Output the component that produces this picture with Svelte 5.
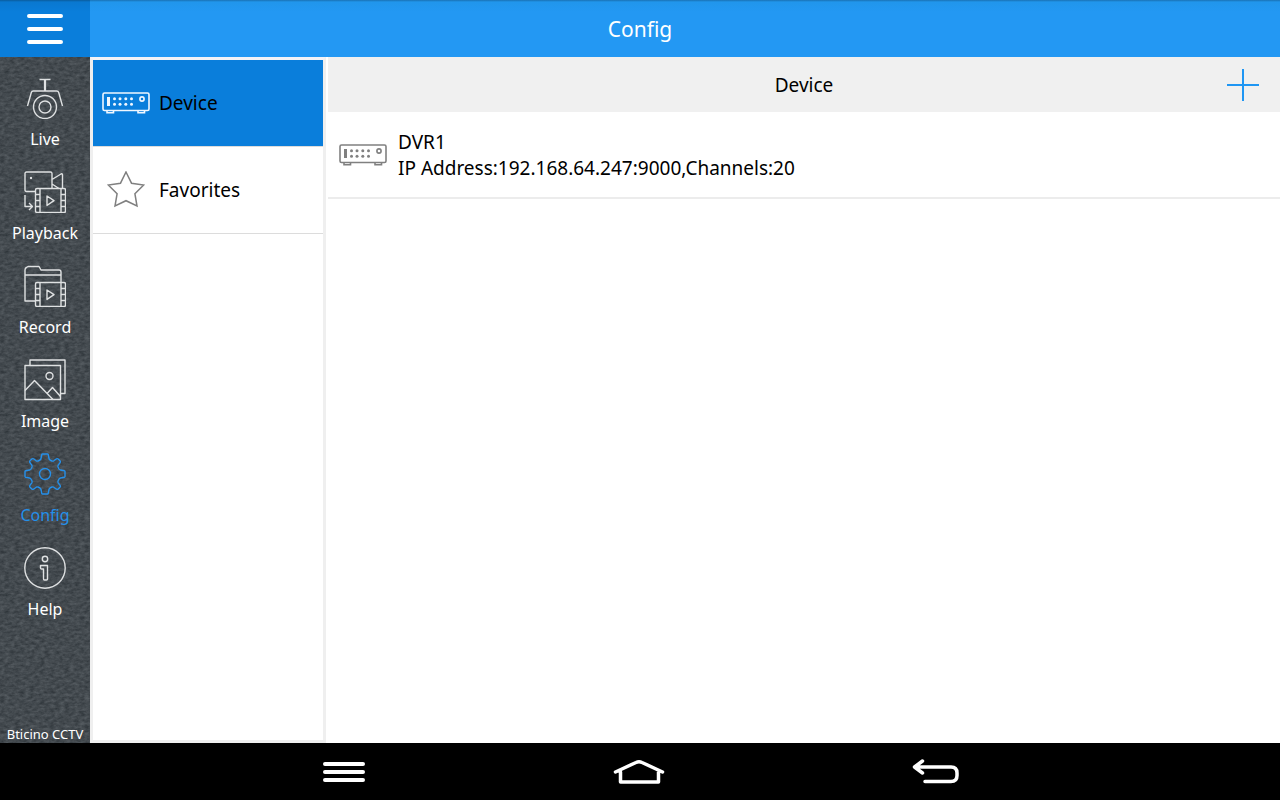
<script>
  const navItems = ['Live', 'Playback', 'Record', 'Image', 'Config', 'Help'];
  const menuItems = ['Device', 'Favorites'];
  let active = $state('Config');
  let section = $state('Device');
  const devices = [{ name: 'DVR1', address: '192.168.64.247:9000', channels: 20 }];
</script>

{#snippet recorder()}
  <svg class="recorder" width="48" height="22" viewBox="0 0 48 22" fill="none" stroke="currentColor" stroke-width="1.6" aria-hidden="true">
    <rect x="1" y="1" width="46" height="17.5" rx="1.5" />
    <path d="M5 19v1.7h6.5V19M36 19v1.7h6.500V19" />
    <path d="M6.500 5v9" stroke-width="3" />
    <circle cx="40" cy="7" r="2.100" />
    <g fill="currentColor" stroke="none">
      {#each [12.500, 18, 23.800, 29.500] as x}
        <circle cx={x} cy="6.800" r="1.500" />
        <circle cx={x} cy="12.200" r="1.500" />
      {/each}
    </g>
  </svg>
{/snippet}

{#snippet film()}
  <path d="M13 17.500h27q1.500 0 1.500 1.500v21q0 1.500-1.500 1.500H13q-1.500 0-1.500-1.500V19q0-1.500 1.500-1.500ZM16 17.500v24M37 17.500v24M11.500 23.500H16M11.500 29.500H16M11.500 35.500H16M37 23.500h4.500M37 29.500h4.500M37 35.500h4.500M23 25l7 4.700-7 4.700Z" />
{/snippet}

<div class="app">
  <header class="topbar">
    <button class="menu" aria-label="Menu">
      <svg width="38" height="32" viewBox="0 0 38 32" stroke="#fff" stroke-width="4" stroke-linecap="round" aria-hidden="true">
        <path d="M3 3h32M3 16h32M3 29h32" />
      </svg>
    </button>
    <h1>Config</h1>
  </header>

  <div class="body">
    <nav class="sidebar">
      <ul>
        {#each navItems as item}
          <li>
            <button class:active={active === item} onclick={() => (active = item)}>
              <svg width="42" height="42" viewBox="0 0 42 42" fill="none" stroke="currentColor" stroke-width="1.400" stroke-linejoin="round" aria-hidden="true">
                {#if item === 'Live'}
                  <path d="M15.500 2.500h11M3.500 29l3.800-13.500q.5-1.500 2-1.500h23.400q1.500 0 2 1.500l3.800 13.500" />
                  <path d="M21 2.500V14" stroke-width="2.200" />
                  <circle cx="21" cy="30" r="11.500" />
                  <circle cx="21" cy="30" r="6" />
                {:else if item === 'Playback'}
                  <path d="M11.500 20.500h-9q-1.500 0-1.500-1.500V2.500Q1 1 2.500 1h24Q28 1 28 2.500v15M28 8.500l9-5.500q1.500-.7 1.500 1v13.500M28 13l7 4.500M1 24v11.500h7M5 32l3.500 3.500L5 39" />
                  <circle cx="7" cy="7" r="1.200" fill="currentColor" stroke="none" />
                  {@render film()}
                {:else if item === 'Record'}
                  <path d="M11.500 36H1V5q0-2 1.500-2.500L4 1.500h11l2 3.500h18q2 0 2 2v10.500M1 10h36" />
                  {@render film()}
                {:else if item === 'Image'}
                  <path d="M6 6.500V1h35v33.500h-4.500" />
                  <rect x="1" y="6.500" width="35.500" height="34" />
                  <path d="M1 31.500l9.500-10 18.500 19M23 34.500l5.500-6 8 9" />
                  <circle cx="25.500" cy="17" r="3.500" />
                {:else if item === 'Config'}
                  <path d="M17 5.500L17.800 1.500Q18 1 18.500 1H23.500Q24 1 24.200 1.500L25 5.500Q25.200 6.500 26 7L28 8Q29 8.300 29.800 7.800L32.500 5.800Q33.500 5.300 34.200 6L36 7.800Q36.700 8.500 36.200 9.500L34.200 12.200Q33.700 13 34 14L35 16Q35.500 16.800 36.500 17L40.500 17.800Q41 18 41 18.500V23.500Q41 24 40.500 24.200L36.500 25Q35.500 25.200 35 26L34 28Q33.700 29 34.200 29.800L36.200 32.500Q36.700 33.500 36 34.200L34.200 36Q33.500 36.700 32.500 36.200L29.800 34.200Q29 33.700 28 34L26 35Q25.200 35.500 25 36.500L24.200 40.500Q24 41 23.500 41H18.500Q18 41 17.800 40.500L17 36.500Q16.800 35.500 16 35L14 34Q13 33.700 12.200 34.200L9.500 36.200Q8.500 36.700 7.800 36L6 34.200Q5.300 33.500 5.800 32.500L7.800 29.800Q8.300 29 8 28L7 26Q6.500 25.200 5.500 25L1.500 24.200Q1 24 1 23.500V18.500Q1 18 1.500 17.800L5.500 17Q6.500 16.800 7 16L8 14Q8.300 13 7.800 12.200L5.800 9.500Q5.300 8.500 6 7.800L7.800 6Q8.500 5.300 9.500 5.800L12.200 7.800Q13 8.300 14 8L16 7Q16.800 6.500 17 5.500Z" />
                  <circle cx="21" cy="21" r="5.500" />
                {:else}
                  <circle cx="21" cy="21" r="20.200" />
                  <circle cx="21" cy="12" r="2.700" />
                  <path d="M16.500 18.500h7v13.500q0 1-1 1h-2q-1 0-1-1V22h-2q-1 0-1-1Z" />
                {/if}
              </svg>
              <span>{item}</span>
            </button>
          </li>
        {/each}
      </ul>
      <p class="brand">Bticino CCTV</p>
    </nav>

    <aside class="panel">
      {#each menuItems as item}
        <button class="entry" class:selected={section === item} onclick={() => (section = item)}>
          <span class="glyph">
            {#if item === 'Device'}
              {@render recorder()}
            {:else}
              <svg width="38" height="38" viewBox="0 0 38 38" fill="none" stroke="#808080" stroke-width="1.500" aria-hidden="true">
                <path d="M19 1l5.500 11.200 12.200 1.800-8.800 8.700 2.100 12.300-11-5.300-11 5.300 2.100-12.300L1.300 14l12.200-1.800Z" />
              </svg>
            {/if}
          </span>
          <span>{item}</span>
        </button>
      {/each}
    </aside>

    <main>
      <div class="heading">
        <h2>Device</h2>
        <button aria-label="Add device">
          <svg width="32" height="32" viewBox="0 0 32 32" stroke="#1f96f3" stroke-width="2" aria-hidden="true">
            <path d="M16 0v32M0 16h32" />
          </svg>
        </button>
      </div>
      {#each devices as device}
        <button class="device">
          {@render recorder()}
          <span class="details">
            <span>{device.name}</span>
            <span>IP Address:{device.address},Channels:{device.channels}</span>
          </span>
        </button>
      {/each}
    </main>
  </div>

  <footer class="system">
    <button aria-label="Options">
      <svg width="44" height="24" viewBox="0 0 44 24" stroke="#fff" stroke-width="4" stroke-linecap="round" aria-hidden="true">
        <path d="M3 4h38M3 12h38M3 20h38" />
      </svg>
    </button>
    <button aria-label="Home">
      <svg width="52" height="26" viewBox="0 0 52 26" fill="none" stroke="#fff" stroke-width="3.500" stroke-linecap="round" stroke-linejoin="round" aria-hidden="true">
        <path d="M2.500 13L23 3.500q3-1.500 6 0L49.500 13M7.500 13v10h38V13" />
      </svg>
    </button>
    <button aria-label="Back">
      <svg width="48" height="26" viewBox="0 0 48 26" fill="none" stroke="#fff" stroke-width="3.500" stroke-linecap="round" stroke-linejoin="round" aria-hidden="true">
        <path d="M10.500 2L2.500 8l8 6M3 8h36q6 0 6 6v2.500q0 6-6 6H13" />
      </svg>
    </button>
  </footer>
</div>

<style>
  :global(body) {
    margin: 0;
  }
  .app {
    display: flex;
    flex-direction: column;
    min-height: 100vh;
    background: #fff;
    color: #000;
    font-family: 'Noto Sans', sans-serif;
    font-size: 19px;
  }
  button {
    border: 0;
    padding: 0;
    background: none;
    color: inherit;
    font: inherit;
    cursor: pointer;
  }
  svg {
    display: block;
    flex: none;
  }
  h1,
  h2,
  p,
  ul {
    margin: 0;
    padding: 0;
    font-weight: 400;
    list-style: none;
  }
  .topbar {
    display: flex;
    height: 57px;
    background: linear-gradient(#1a71b4, #2196ec 2px, #2398f3 12px);
    color: #fff;
  }
  .menu {
    display: grid;
    place-items: center;
    width: 90px;
    background: linear-gradient(#0b5c9c, #0a78d0 2px, #0a7edb 12px);
  }
  h1 {
    flex: 1;
    padding-right: 90px;
    font-size: 21px;
    line-height: 58px;
    text-align: center;
  }
  .body {
    display: flex;
    flex: 1;
  }
  .sidebar {
    display: flex;
    flex-direction: column;
    justify-content: space-between;
    width: 90px;
    background-color: #454b50;
    background-image: url("data:image/svg+xml,%3Csvg xmlns='http://www.w3.org/2000/svg' width='180' height='180'%3E%3Cfilter id='n' x='0' y='0' width='1' height='1' color-interpolation-filters='sRGB'%3E%3CfeTurbulence type='fractalNoise' baseFrequency='.2 .35' numOctaves='3' stitchTiles='stitch'/%3E%3CfeColorMatrix values='.2 0 0 0 .165 .2 0 0 0 .19 .2 0 0 0 .21 0 0 0 0 1'/%3E%3C/filter%3E%3Crect width='180' height='180' filter='url(%23n)'/%3E%3C/svg%3E");
    color: #fff;
  }
  .sidebar li button {
    display: flex;
    flex-direction: column;
    align-items: center;
    gap: 9px;
    width: 100%;
    padding: 20px 0 1px;
    font-size: 16px;
    line-height: 22px;
  }
  .sidebar li svg {
    color: #dfe1e2;
  }
  .sidebar .active,
  .sidebar .active svg {
    color: #2590ea;
  }
  .brand {
    font-size: 13px;
    line-height: 18px;
    text-align: center;
    white-space: nowrap;
  }
  .panel {
    box-sizing: border-box;
    width: 236px;
    border: 3px solid #efefef;
    border-top-color: #f3f3f7;
  }
  .entry {
    display: flex;
    align-items: center;
    gap: 8px;
    box-sizing: border-box;
    width: 100%;
    height: 87px;
    padding-left: 8px;
    border-bottom: 1px solid #dcdcdc;
  }
  .selected {
    background: #0a7edb;
  }
  .glyph {
    display: grid;
    place-items: center;
    width: 50px;
  }
  .recorder {
    color: #808080;
  }
  .selected .recorder {
    color: #f0f7ff;
  }
  main {
    flex: 1;
    margin-left: 2px;
  }
  .heading {
    display: flex;
    align-items: center;
    height: 55px;
    padding-right: 21px;
    background: #f0f0f0;
  }
  h2 {
    flex: 1;
    padding-left: 53px;
    font-size: 19px;
    text-align: center;
  }
  .device {
    display: flex;
    align-items: center;
    gap: 11px;
    box-sizing: border-box;
    width: 100%;
    height: 87px;
    padding-left: 11px;
    border-bottom: 2px solid #ececec;
    line-height: 26px;
    text-align: left;
  }
  .details {
    display: flex;
    flex-direction: column;
  }
  .system {
    display: flex;
    justify-content: center;
    gap: 247px;
    height: 57px;
    padding-left: 2px;
    background: #000;
  }
</style>
